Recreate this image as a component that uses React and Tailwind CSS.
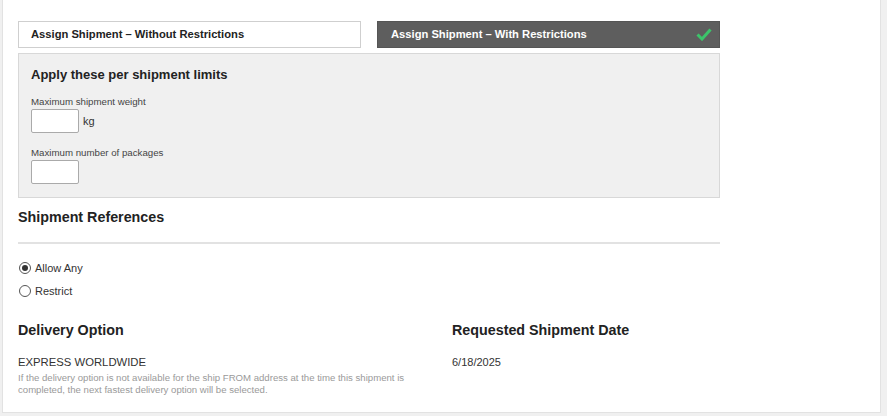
export default function App() {
  return (
    <div className="min-h-screen w-[887px] h-[416px] overflow-hidden bg-[#f0f0f0] font-['Liberation_Sans',Arial,sans-serif] text-[#333]">
      <div className="ml-[2px] w-[879px] h-[413px] bg-white border-l border-r border-b border-[#e2e2e2] pl-[15px] pt-[21px]">
        <div className="w-[702px]">
          {/* tabs */}
          <div className="flex gap-[16px]">
            <div className="w-[343px] h-[27px] flex items-center px-[12px] bg-white border border-[#cfcfcf] text-[11.2px] font-bold text-[#222]">
              Assign Shipment – Without Restrictions
            </div>
            <div className="w-[343px] h-[27px] flex items-center justify-between pl-[13px] pr-[7px] bg-[#5e5e5e] border border-[#555] text-[11.2px] font-bold text-white">
              <span>Assign Shipment – With Restrictions</span>
              <svg width="16" height="13" viewBox="0 0 16 13">
                <polyline points="1.5,6.5 6,11 14.5,1.5" fill="none" stroke="#3cc46a" strokeWidth="3" />
              </svg>
            </div>
          </div>

          {/* limits panel */}
          <div className="mt-[5px] h-[145px] bg-[#f0f0f0] border border-[#d8d8d8] pl-[12px] pt-[12px]">
            <div className="text-[13px] font-bold text-[#222] leading-[17px]">Apply these per shipment limits</div>
            <div className="mt-[13px] text-[9.7px] text-[#444] leading-[12px]">Maximum shipment weight</div>
            <div className="flex items-center gap-[4px] mt-[1px]">
              <div className="w-[48px] h-[24px] bg-white border border-[#aaa] rounded-[2px]"></div>
              <span className="text-[11px] text-[#333]">kg</span>
            </div>
            <div className="mt-[14px] text-[9.7px] text-[#444] leading-[12px]">Maximum number of packages</div>
            <div className="mt-[1px] w-[48px] h-[24px] bg-white border border-[#aaa] rounded-[2px]"></div>
          </div>

          {/* shipment references */}
          <div className="mt-[9px] text-[14.3px] font-bold text-[#222] leading-[20px]">Shipment References</div>
          <div className="mt-[15px] h-[2px] bg-[#e2e2e2]"></div>
          <div className="mt-[17px] ml-[1px] flex items-center gap-[4px] text-[11px] text-[#333] leading-[14px]">
            <span className="w-[12px] h-[12px] rounded-full border border-[#555] flex items-center justify-center">
              <span className="w-[6px] h-[6px] rounded-full bg-[#333]"></span>
            </span>
            Allow Any
          </div>
          <div className="mt-[9px] ml-[1px] flex items-center gap-[4px] text-[11px] text-[#333] leading-[14px]">
            <span className="w-[12px] h-[12px] rounded-full border border-[#555]"></span>
            Restrict
          </div>

          {/* delivery / date */}
          <div className="mt-[22px] flex">
            <div className="w-[434px]">
              <div className="text-[14.3px] font-bold text-[#222] leading-[20px]">Delivery Option</div>
              <div className="mt-[15px] text-[11.3px] text-[#333] leading-[14px]">EXPRESS WORLDWIDE</div>
              <div className="mt-[3px] text-[9.6px] text-[#9a9a9a] leading-[12px] w-[400px]">
                If the delivery option is not available for the ship FROM address at the time this shipment is completed, the next fastest delivery option will be selected.
              </div>
            </div>
            <div>
              <div className="text-[14.3px] font-bold text-[#222] leading-[20px]">Requested Shipment Date</div>
              <div className="mt-[15px] text-[11px] text-[#333] leading-[14px]">6/18/2025</div>
            </div>
          </div>
        </div>
      </div>
    </div>
  );
}
